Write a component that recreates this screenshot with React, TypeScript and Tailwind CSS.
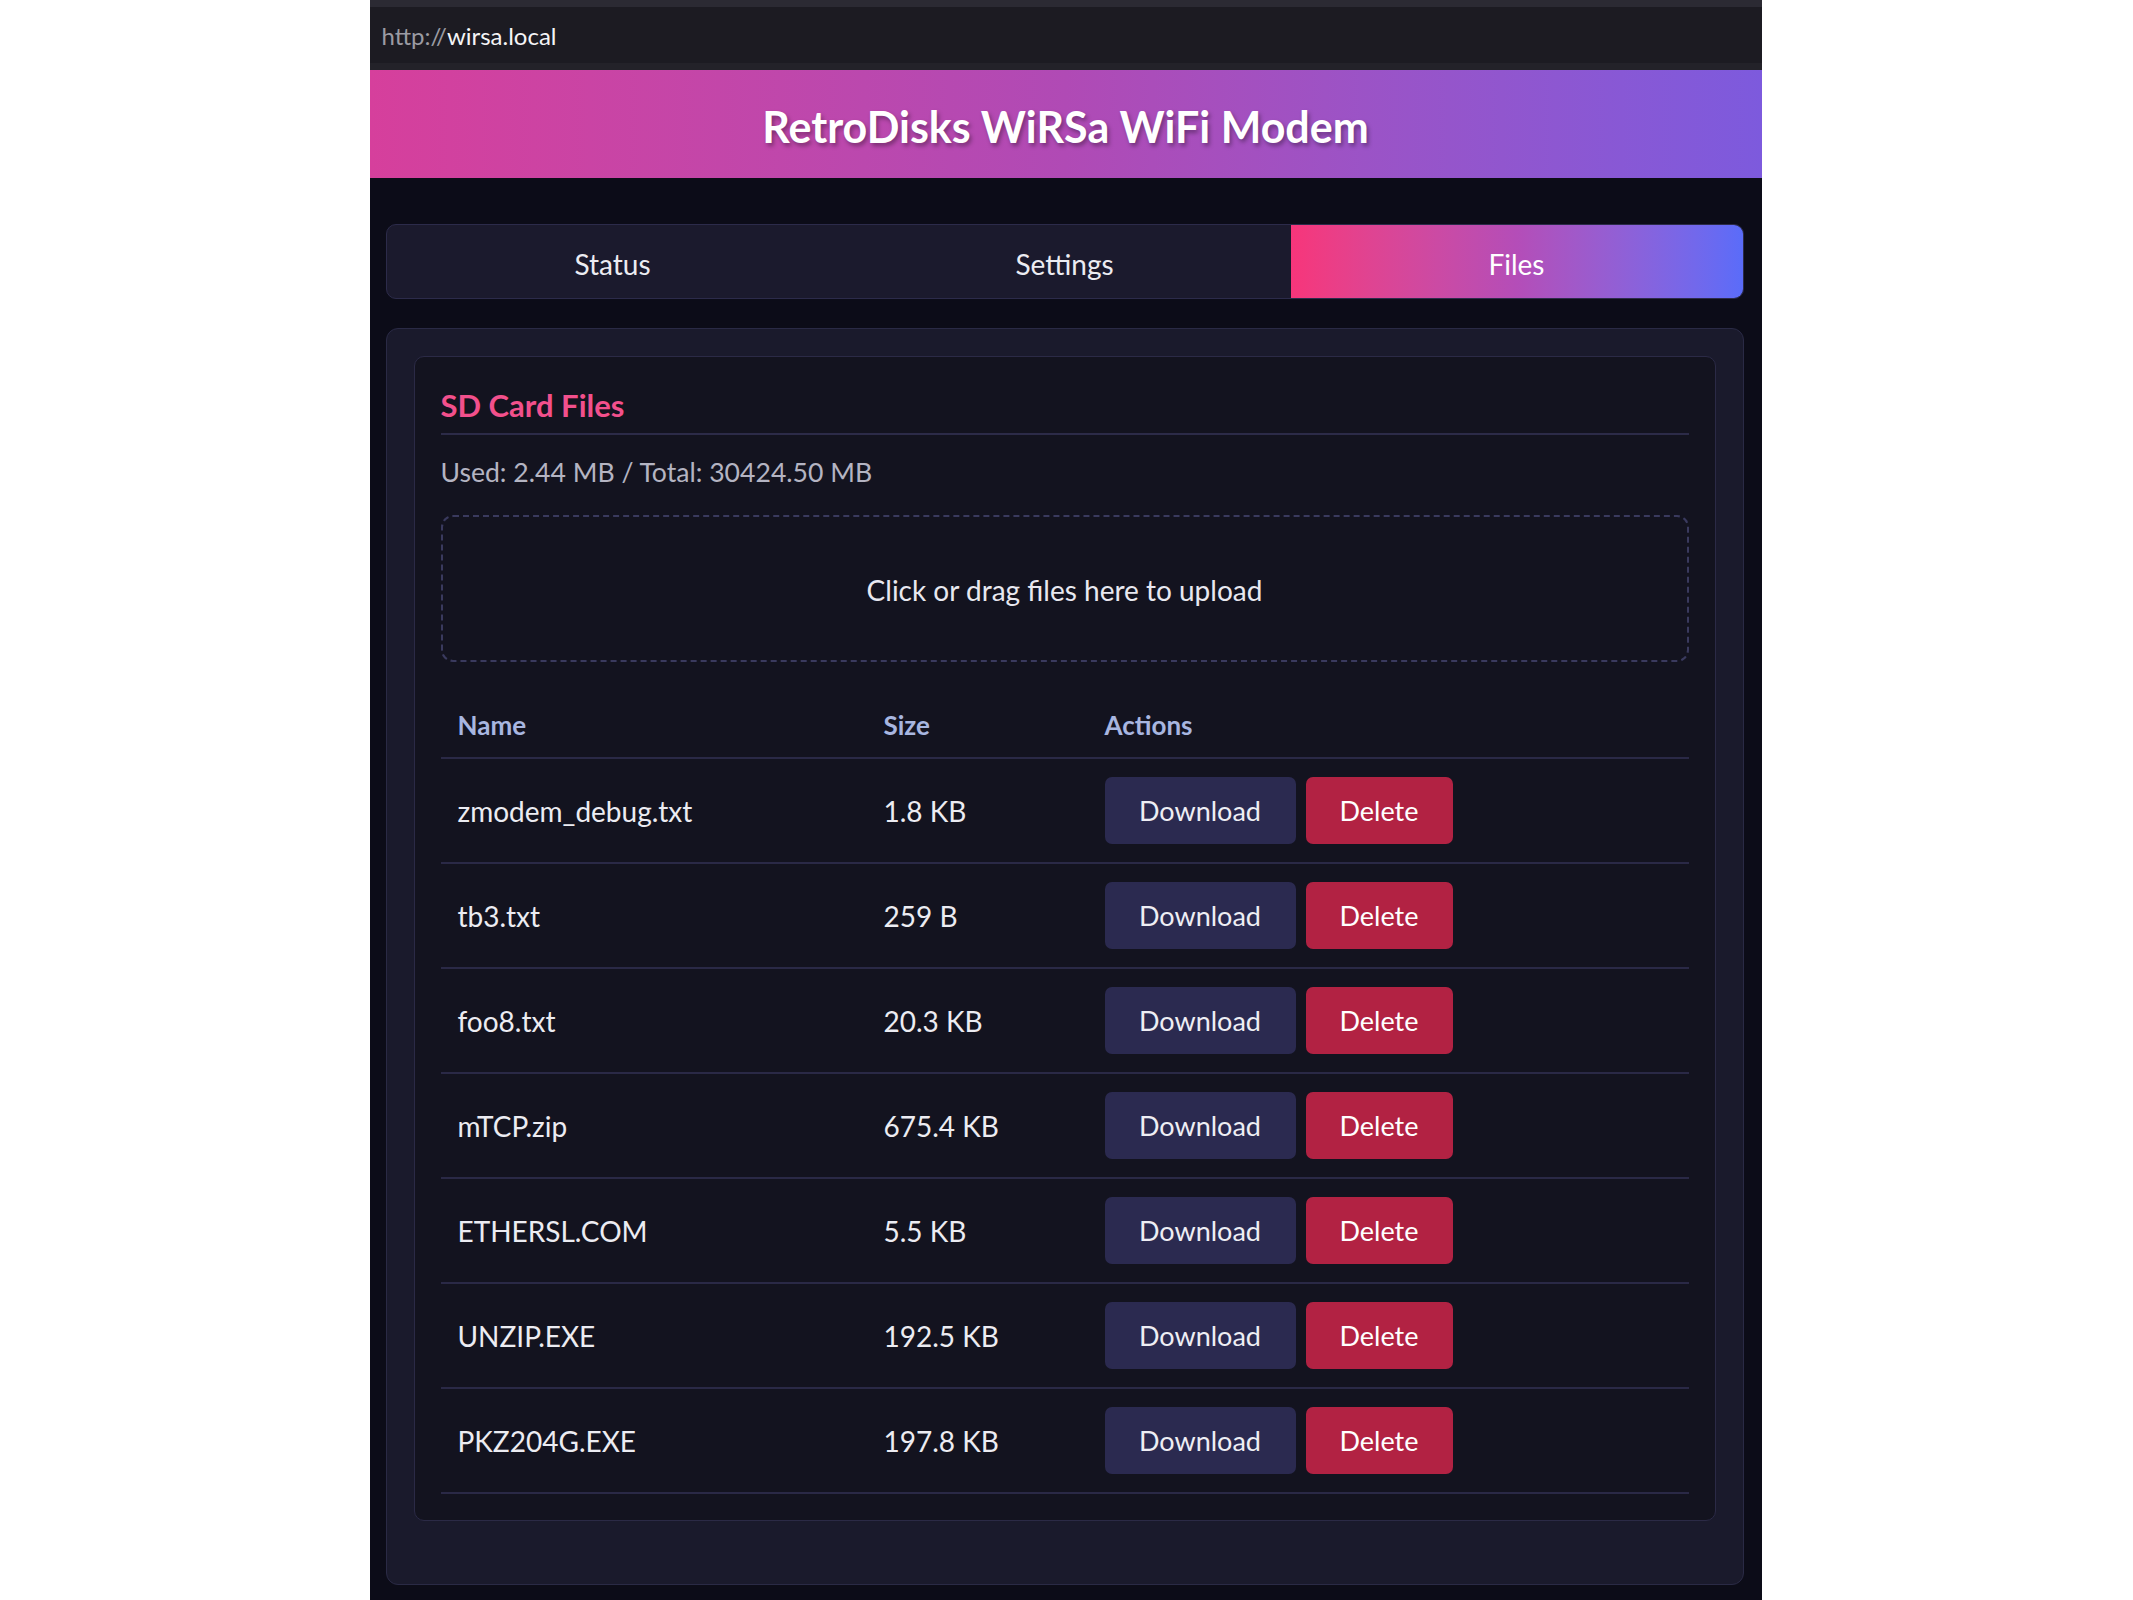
import { useState } from "react";

type SdFile = { name: string; size: string };

const files: SdFile[] = [
  { name: "zmodem_debug.txt", size: "1.8 KB" },
  { name: "tb3.txt", size: "259 B" },
  { name: "foo8.txt", size: "20.3 KB" },
  { name: "mTCP.zip", size: "675.4 KB" },
  { name: "ETHERSL.COM", size: "5.5 KB" },
  { name: "UNZIP.EXE", size: "192.5 KB" },
  { name: "PKZ204G.EXE", size: "197.8 KB" },
];

const tabs = ["Status", "Settings", "Files"];

export default function App() {
  const [activeTab, setActiveTab] = useState("Files");

  return (
    <div className="min-h-screen bg-white flex justify-center font-['Lato','Noto_Sans',sans-serif]">
      <div className="w-[1392px] h-[1600px] -translate-x-[1px] bg-[#0c0c18] flex flex-col overflow-hidden">
        {/* browser chrome */}
        <div className="h-[7px] bg-[#2b2a33]" />
        <div className="h-[56px] bg-[#1c1b22] flex items-center px-[12px] pt-[2px] text-[24px]">
          <span className="text-[#9b9ba3]">http://</span>
          <span className="text-[#f4f4f6]">wirsa.local</span>
        </div>
        <div className="h-[7px] bg-[#232229]" />

        {/* header */}
        <header className="h-[108px] pt-[6px] bg-gradient-to-r from-[#d63f9c] via-[#b04ab5] to-[#7d5add] flex items-center justify-center">
          <h1 className="text-[43px] font-bold text-white [text-shadow:2px_3px_4px_rgba(0,0,0,0.35)]">
            RetroDisks WiRSa WiFi Modem
          </h1>
        </header>

        <main className="pl-[16px] pr-[18px] pt-[46px]">
          {/* tabs */}
          <div className="h-[75px] flex rounded-[10px] border border-[#2c2b4a] bg-[#1b1a2d] overflow-hidden">
            {tabs.map((tab) => (
              <button
                key={tab}
                onClick={() => setActiveTab(tab)}
                className={`flex-1 pt-[4px] text-[28px] ${
                  activeTab === tab
                    ? "bg-gradient-to-r from-[#f7357a] via-[#b44db8] to-[#5a6cf9] text-white"
                    : "text-[#ececf2]"
                }`}
              >
                {tab}
              </button>
            ))}
          </div>

          {/* files panel */}
          <section className="mt-[29px] rounded-[12px] border border-[#2a2a45] bg-[#1a1a2c] px-[27px] pt-[27px] pb-[63px]">
            <div className="rounded-[10px] border border-[#2b2a46] bg-[#13131f] px-[26px] pt-[29px] pb-[26px]">
              <h2 className="text-[31px] leading-[38px] font-bold text-[#f2508c] pb-[9px] border-b-2 border-[#2c2b48]">
                SD Card Files
              </h2>
              <p className="mt-[20px] text-[26.6px] leading-[34px] text-[#b4b4c2]">
                Used: 2.44 MB / Total: 30424.50 MB
              </p>

              <div className="mt-[26px] h-[147px] pt-[3px] rounded-[12px] border-2 border-dashed border-[#3a3a5e] flex items-center justify-center text-[28px] text-[#e8e8f0] cursor-pointer">
                Click or drag files here to upload
              </div>

              <table className="mt-[29px] w-full border-collapse">
                <thead>
                  <tr className="h-[67px] border-b-2 border-[#2a2946]">
                    <th className="w-[426px] px-[17px] pt-[2px] text-left text-[26px] font-bold text-[#a8b6e0]">Name</th>
                    <th className="w-[221px] px-[17px] pt-[2px] text-left text-[26px] font-bold text-[#a8b6e0]">Size</th>
                    <th className="px-[17px] pt-[2px] text-left text-[26px] font-bold text-[#a8b6e0]">Actions</th>
                  </tr>
                </thead>
                <tbody>
                  {files.map((f) => (
                    <tr key={f.name} className="h-[105px] border-b-2 border-[#2a2946]">
                      <td className="px-[17px] pt-[1px] text-[28px] text-[#ececf2]">{f.name}</td>
                      <td className="px-[17px] pt-[1px] text-[28px] text-[#ececf2]">{f.size}</td>
                      <td className="px-[17px]">
                        <div className="flex gap-[10px]">
                          <button className="w-[191px] h-[67px] pt-[2px] rounded-[7px] bg-[#2b2a50] text-[27px] text-[#eeeef4]">
                            Download
                          </button>
                          <button className="w-[147px] h-[67px] pt-[2px] rounded-[7px] bg-[#b22243] text-[27px] text-white">
                            Delete
                          </button>
                        </div>
                      </td>
                    </tr>
                  ))}
                </tbody>
              </table>
            </div>
          </section>
        </main>
      </div>
    </div>
  );
}
